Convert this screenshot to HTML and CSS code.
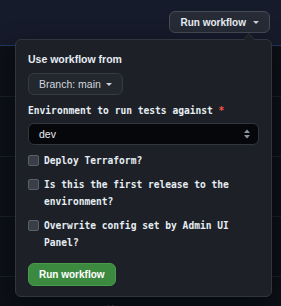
FILE: index.html
```html
<!DOCTYPE html>
<html lang="en">
<head>
  <meta charset="UTF-8">
  <meta name="viewport" content="width=device-width, initial-scale=1.0">
  <title>Run workflow</title>
  <link rel="stylesheet" href="styles.css">
</head>
<body>
<header class="topbar">
  <button class="btn-run">Run workflow <span class="caret"></span></button>
</header>
<div class="row"></div>
<div class="row"></div>
<div class="row"></div>
<div class="row"></div>
<div class="row last">
  <svg class="row-icon" width="11" height="11" viewBox="0 0 11 11">
    <rect x="1" y="2" width="9" height="8" rx="1.5" fill="none" stroke="#6e7681" stroke-width="1.2"/>
    <line x1="3.5" y1="0.5" x2="3.5" y2="3" stroke="#6e7681" stroke-width="1.2"/>
    <line x1="7.5" y1="0.5" x2="7.5" y2="3" stroke="#6e7681" stroke-width="1.2"/>
  </svg>
</div>

<div class="popover">
  <div class="title">Use workflow from</div>
  <button class="btn-branch">Branch: main <span class="caret"></span></button>

  <label class="field-label">Environment to run tests against <span class="req">*</span></label>
  <div class="select">
    <span>dev</span>
    <svg width="8" height="12" viewBox="0 0 8 12">
      <path d="M4 1.5 L7 5 H1 Z" fill="#8b949e"/>
      <path d="M4 10.5 L7 7 H1 Z" fill="#8b949e"/>
    </svg>
  </div>

  <div class="check">
    <span class="box"></span>
    <span class="check-text">Deploy Terraform?</span>
  </div>
  <div class="check">
    <span class="box"></span>
    <span class="check-text">Is this the first release to the environment?</span>
  </div>
  <div class="check">
    <span class="box"></span>
    <span class="check-text">Overwrite config set by Admin UI Panel?</span>
  </div>

  <button class="btn-green">Run workflow</button>
</div>
</body>
</html>
```

FILE: styles.css
```css
body {
  margin: 0;
  background-color: #0d1117;
  font-family: "Liberation Sans", Arial, sans-serif;
  color: #e6edf3;
  overflow: hidden;
}
.topbar {
  height: 46px;
  box-sizing: border-box;
  background-color: #161b2b;
  border-bottom: 1px solid #213a66;
  display: flex;
  justify-content: flex-end;
  align-items: flex-start;
  padding: 11px 11px 0 0;
}
.btn-run {
  height: 22px;
  padding: 0 10px;
  background-color: #262b35;
  border: 1px solid #464c58;
  border-radius: 6px;
  color: #e6edf3;
  font-family: inherit;
  font-size: 10px;
  font-weight: bold;
  display: flex;
  align-items: center;
  gap: 7px;
}
.caret {
  width: 0;
  height: 0;
  border-left: 3px solid transparent;
  border-right: 3px solid transparent;
  border-top: 3px solid #c9d1d9;
}
.row {
  height: 59px;
  border-bottom: 1px solid #1c2128;
}
.row:first-of-type {
  height: 50px;
}
.row.last {
  height: 4px;
  padding: 25px 0 0 105px;
  border-bottom: none;
  overflow: hidden;
}
.popover {
  position: absolute;
  z-index: 1;
  left: 15px;
  top: 39px;
  width: 231px;
  padding: 12px 12px 10px 12px;
  background-color: #1d2127;
  border: 1px solid #30363d;
  border-radius: 6px;
  box-shadow: 0 8px 24px rgba(1, 4, 9, 0.6);
}
.popover::before,
.popover::after {
  content: "";
  position: absolute;
  right: 16px;
  width: 0;
  height: 0;
  border-left: 6px solid transparent;
  border-right: 6px solid transparent;
}
.popover::before {
  top: -7px;
  border-bottom: 7px solid #30363d;
}
.popover::after {
  top: -6px;
  border-bottom: 7px solid #1d2127;
}
.title {
  font-size: 10.5px;
  font-weight: bold;
  line-height: 14px;
}
.btn-branch {
  margin-top: 7px;
  height: 22px;
  padding: 0 10px;
  background-color: #23272e;
  border: 1px solid #353a43;
  border-radius: 6px;
  color: #d0d7de;
  font-family: inherit;
  font-size: 10.5px;
  display: flex;
  align-items: center;
  gap: 5px;
}
.field-label {
  display: block;
  margin-top: 8px;
  font-family: "DejaVu Sans Mono", "Liberation Mono", monospace;
  font-size: 9.6px;
  font-weight: bold;
  line-height: 16px;
}
.req {
  color: #f85149;
}
.select {
  margin-top: 4px;
  height: 22px;
  box-sizing: border-box;
  padding: 0 7px 0 10px;
  background-color: #05070b;
  border: 1px solid #30363d;
  border-radius: 6px;
  display: flex;
  align-items: center;
  justify-content: space-between;
  font-size: 10.5px;
}
.check {
  margin-top: 7px;
  display: flex;
  align-items: flex-start;
  gap: 5px;
}
.box {
  flex: none;
  width: 9px;
  height: 9px;
  margin-top: 3px;
  background-color: #3a3f47;
  border: 1px solid #5a606a;
  border-radius: 2px;
}
.check-text {
  font-family: "DejaVu Sans Mono", "Liberation Mono", monospace;
  font-size: 9.6px;
  font-weight: bold;
  line-height: 17px;
}
.btn-green {
  margin-top: 12px;
  height: 23px;
  padding: 0 10px;
  background-color: #3c8a40;
  border: 1px solid #4a9a4e;
  border-radius: 6px;
  color: #ffffff;
  font-family: inherit;
  font-size: 10px;
  font-weight: bold;
}
```
